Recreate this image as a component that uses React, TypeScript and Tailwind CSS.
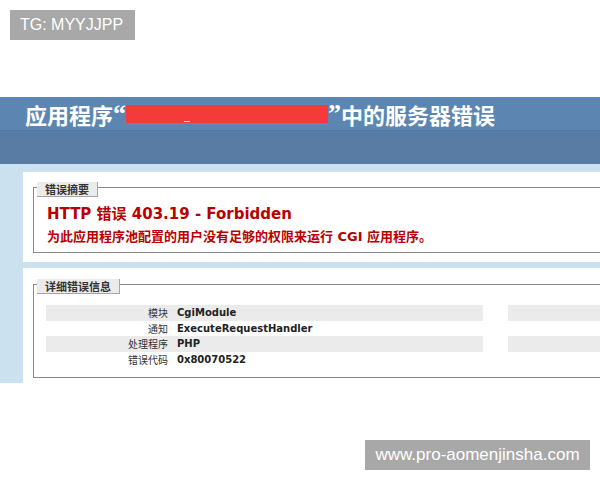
import React from "react";

const cjk = '"Noto Sans CJK SC", sans-serif';
const verd = '"DejaVu Sans", "Noto Sans CJK SC", sans-serif';
const quote = '"Liberation Serif", serif';

function Row({ label, value, gray }: { label: string; value: string; gray: boolean }) {
  return (
    <div className="flex h-[15.5px] items-center">
      <div className={`flex h-full w-[437px] shrink-0 items-center ${gray ? "bg-[#ebebeb]" : ""}`}>
        <div className="w-[122px] shrink-0 text-right text-[10px] text-[#333]" style={{ fontFamily: cjk }}>
          {label}
        </div>
        <div className="pl-[9px] text-[10px] font-bold text-[#222]" style={{ fontFamily: verd }}>
          {value}
        </div>
      </div>
      <div className={`ml-[25px] h-full w-[160px] shrink-0 ${gray ? "bg-[#ebebeb]" : ""}`} />
    </div>
  );
}

function Legend({ children }: { children: React.ReactNode }) {
  return (
    <div
      className="-mt-[6px] ml-[3px] block h-[15px] w-fit border-b border-r border-[#a5a5a5] bg-[#ebebeb] px-[8px] text-[11px] font-bold leading-[15px] text-[#333]"
      style={{ fontFamily: cjk }}
    >
      {children}
    </div>
  );
}

export default function App() {
  return (
    <div className="relative h-[480px] w-[600px] overflow-hidden bg-white">
      <div className="h-[97px]" />
      <div
        className="flex h-[33px] items-center bg-[#5c86b1] pl-[25px] text-[22px] font-bold leading-none text-white whitespace-nowrap"
        style={{ fontFamily: cjk }}
      >
        <span>应用程序</span>
        <span className="text-[26px]" style={{ fontFamily: quote }}>“</span>
        <span className="relative inline-block h-[18px] w-[202px] bg-[#f43a3a]">
          <span className="absolute bottom-[1px] left-[58px] h-[1px] w-[6px] bg-[#d8d8d8]" />
        </span>
        <span className="text-[26px]" style={{ fontFamily: quote }}>”</span>
        <span>中的服务器错误</span>
      </div>
      <div className="h-[34px] border-t border-[#52769c] bg-[#587ca4]" />
      <div className="h-[219px] bg-[#cbe1ef] pl-[23px] pt-[8px]">
        <div className="h-[90px] w-[640px] bg-white pl-[10px] pt-[15px]">
          <div className="h-[66px] w-[620px] border border-[#8a8a8a]">
            <Legend>错误摘要</Legend>
            <div className="pl-[13px]">
              <div
                className="mt-[8px] text-[15px] font-bold leading-[18px] text-[#b80000] whitespace-nowrap"
                style={{ fontFamily: verd }}
              >
                HTTP 错误 403.19 - Forbidden
              </div>
              <div
                className="mt-[6px] text-[13px] font-bold leading-[16px] text-[#b80000] whitespace-nowrap"
                style={{ fontFamily: verd }}
              >
                为此应用程序池配置的用户没有足够的权限来运行 CGI 应用程序。
              </div>
            </div>
          </div>
        </div>
        <div className="mt-[6px] h-[115px] w-[640px] bg-white pl-[10px] pt-[16px]">
          <div className="h-[94px] w-[620px] border border-[#8a8a8a]">
            <Legend>详细错误信息</Legend>
            <div className="mt-[11px] pl-[12px]">
              <Row label="模块" value="CgiModule" gray />
              <Row label="通知" value="ExecuteRequestHandler" gray={false} />
              <Row label="处理程序" value="PHP" gray />
              <Row label="错误代码" value="0x80070522" gray={false} />
            </div>
          </div>
        </div>
      </div>

      <div
        className="absolute left-[10px] top-[10px] flex h-[30px] w-[125px] items-center bg-[#a8a8a8] pl-[10px] text-[16px] text-white"
        style={{ fontFamily: '"Liberation Sans", sans-serif' }}
      >
        TG: MYYJJPP
      </div>
      <div
        className="absolute left-[365px] top-[440px] flex h-[30px] w-[225px] items-center justify-center bg-[#a8a8a8] text-[17px] text-white"
        style={{ fontFamily: '"Liberation Sans", sans-serif' }}
      >
        www.pro-aomenjinsha.com
      </div>
    </div>
  );
}
